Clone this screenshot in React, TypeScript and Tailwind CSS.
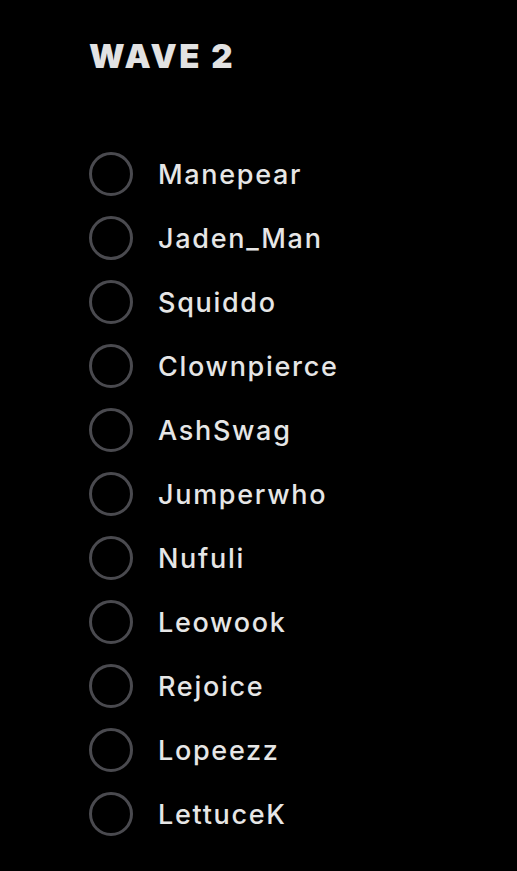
import React from "react";

const players = [
  "Manepear",
  "Jaden_Man",
  "Squiddo",
  "Clownpierce",
  "AshSwag",
  "Jumperwho",
  "Nufuli",
  "Leowook",
  "Rejoice",
  "Lopeezz",
  "LettuceK",
];

export default function App() {
  return (
    <div
      className="min-h-[871px] w-full bg-black pl-[89px] pt-[34px] text-[#e6e6e6]"
      style={{ fontFamily: "Inter, 'Liberation Sans', sans-serif" }}
    >
      <h1 className="text-[33px] font-black leading-[44px] tracking-[2.6px] text-[#e2e2e2]">
        WAVE 2
      </h1>
      <ul className="mt-[74px] flex flex-col gap-[20px]">
        {players.map((name) => (
          <li key={name} className="flex h-[44px] items-center gap-[25px]">
            <span className="h-[44px] w-[44px] shrink-0 rounded-full border-[3px] border-[#4a4a4f]" />
            <span className="pt-[3px] text-[27px] font-medium tracking-[1.7px]">{name}</span>
          </li>
        ))}
      </ul>
    </div>
  );
}
